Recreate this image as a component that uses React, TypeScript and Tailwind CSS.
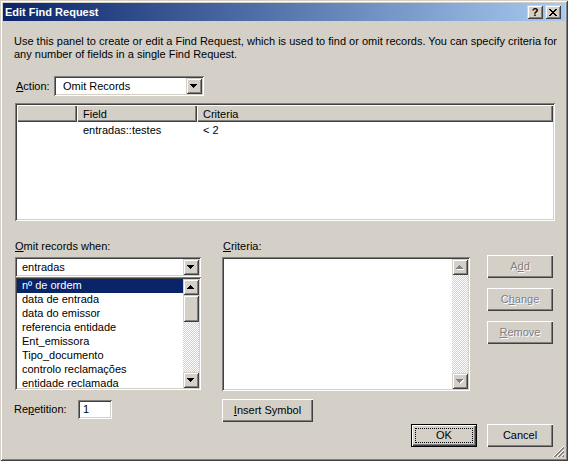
import React from 'react';

const sunken =
    'shadow-[inset_1px_1px_0_#808080,inset_-1px_-1px_0_#ffffff,inset_2px_2px_0_#404040,inset_-2px_-2px_0_#d4d0c8]';
const raised =
    'shadow-[inset_1px_1px_0_#d4d0c8,inset_-1px_-1px_0_#404040,inset_2px_2px_0_#ffffff,inset_-2px_-2px_0_#808080]';
const pushBtn =
    'shadow-[inset_1px_1px_0_#ffffff,inset_-1px_-1px_0_#404040,inset_-2px_-2px_0_#808080]';
const dither =
    'bg-[repeating-conic-gradient(#ffffff_0_25%,#d4d0c8_0_50%)] bg-[length:2px_2px]';

function Arrow({ up = false, disabled = false }: { up?: boolean; disabled?: boolean }) {
    const rows = up ? [3, 2, 1, 0] : [0, 1, 2, 3];
    const shape = (dx: number, fill: string) =>
        rows.map((inset, y) => (
            <rect key={fill + y} x={inset + dx} y={y + dx} width={7 - inset * 2} height={1} fill={fill} />
        ));
    return (
        <svg width="8" height="5" viewBox="0 0 8 5" shapeRendering="crispEdges">
            {disabled ? (
                <>
                    {shape(1, '#ffffff')}
                    {shape(0, '#808080')}
                </>
            ) : (
                shape(0, '#000000')
            )}
        </svg>
    );
}

function ArrowBtn({ up, disabled }: { up?: boolean; disabled?: boolean }) {
    return (
        <div className={`flex h-[16px] w-[16px] shrink-0 items-center justify-center bg-[#d4d0c8] ${raised}`}>
            <Arrow up={up} disabled={disabled} />
        </div>
    );
}

function Combo({ value, width, pad }: { value: string; width: string; pad: string }) {
    return (
        <div className={`flex h-[20px] ${width} items-center bg-white p-[2px] ${sunken}`}>
            <span className={`flex-1 ${pad}`}>{value}</span>
            <ArrowBtn />
        </div>
    );
}

function Button({
    children,
    w,
    disabled = false,
}: {
    children: React.ReactNode;
    w: string;
    disabled?: boolean;
}) {
    return (
        <div
            className={`flex h-[23px] ${w} items-center justify-center bg-[#d4d0c8] ${pushBtn} ${
                disabled ? 'text-[#808080] [text-shadow:1px_1px_0_#ffffff]' : ''
            }`}
        >
            {children}
        </div>
    );
}

const fields = [
    'nº de ordem',
    'data de entrada',
    'data do emissor',
    'referencia entidade',
    'Ent_emissora',
    'Tipo_documento',
    'controlo reclamações',
    'entidade reclamada',
];

export default function App() {
    return (
        <div className="relative flex h-[461px] w-[568px] flex-col bg-[#d4d0c8] p-[3px] font-['Liberation_Sans',Arial,sans-serif] text-[11px] leading-[13px] text-black shadow-[inset_1px_1px_0_#d4d0c8,inset_-1px_-1px_0_#404040,inset_2px_2px_0_#ffffff,inset_-2px_-2px_0_#808080]">
            {/* title bar */}
            <div className="flex h-[18px] items-center bg-[linear-gradient(to_right,#0a246a,#a6caf0)] pl-[2px] pr-[4px]">
                <span className="flex-1 font-bold text-white">Edit Find Request</span>
                <div className={`flex h-[14px] w-[16px] items-center justify-center bg-[#d4d0c8] font-bold ${raised}`}>
                    ?
                </div>
                <div className={`ml-[2px] flex h-[14px] w-[16px] items-center justify-center bg-[#d4d0c8] ${raised}`}>
                    <svg width="8" height="7" viewBox="0 0 8 7" shapeRendering="crispEdges">
                        <path
                            d="M0 0h2v1H0zM6 0h2v1H6zM1 1h2v1H1zM5 1h2v1H5zM2 2h4v1H2zM3 3h2v1H3zM2 4h4v1H2zM1 5h2v1H1zM5 5h2v1H5zM0 6h2v1H0zM6 6h2v1H6z"
                            fill="#000"
                        />
                    </svg>
                </div>
            </div>

            <div className="flex flex-col pl-[11px] pr-[11px]">
                <p className="mt-[14px] whitespace-nowrap">
                    Use this panel to create or edit a Find Request, which is used to find or omit records. You can specify criteria for
                    <br />
                    any number of fields in a single Find Request.
                </p>

                {/* action */}
                <div className="mt-[15px] flex h-[20px] items-center">
                    <span className="w-[40px] pl-[2px]">
                        <u>A</u>ction:
                    </span>
                    <Combo value="Omit Records" width="w-[150px]" pad="pl-[7px]" />
                </div>

                {/* request list */}
                <div className={`ml-[1px] mt-[7px] flex h-[118px] w-[540px] flex-col bg-white p-[2px] ${sunken}`}>
                    <div className="flex h-[17px] shrink-0 bg-[#d4d0c8]">
                        <div className={`w-[60px] ${pushBtn}`} />
                        <div className={`flex w-[120px] items-center pl-[6px] pt-[2px] ${pushBtn}`}>Field</div>
                        <div className={`flex flex-1 items-center pl-[6px] pt-[2px] ${pushBtn}`}>Criteria</div>
                    </div>
                    <div className="mt-[2px] flex">
                        <span className="w-[60px]" />
                        <span className="w-[120px] pl-[6px]">entradas::testes</span>
                        <span className="pl-[6px]">&lt; 2</span>
                    </div>
                </div>

                {/* lower part */}
                <div className="mt-[19px] flex">
                    <div className="ml-[1px] flex w-[186px] flex-col">
                        <span className="h-[17px]">
                            <u>O</u>mit records when:
                        </span>
                        <Combo value="entradas" width="w-[186px]" pad="pl-[5px]" />
                        <div className={`flex h-[113px] bg-white p-[2px] ${sunken}`}>
                            <div className="flex flex-1 flex-col overflow-hidden">
                                {fields.map((f, i) => (
                                    <div
                                        key={f}
                                        className={`h-[14px] shrink-0 whitespace-nowrap pl-[5px] leading-[13px] ${
                                            i === 0 ? 'bg-[#0a246a] text-white' : ''
                                        }`}
                                    >
                                        {f}
                                    </div>
                                ))}
                            </div>
                            <div className="flex w-[16px] flex-col">
                                <ArrowBtn up />
                                <div className={`h-[27px] bg-[#d4d0c8] ${raised}`} />
                                <div className={`flex-1 ${dither}`} />
                                <ArrowBtn />
                            </div>
                        </div>
                        <div className="-ml-[1px] mt-[10px] flex h-[19px] items-center">
                            <span className="w-[64px]">
                                Re<u>p</u>etition:
                            </span>
                            <div className={`flex h-[19px] w-[34px] items-center bg-white p-[2px] pl-[5px] ${sunken}`}>1</div>
                        </div>
                    </div>

                    <div className="ml-[21px] flex w-[248px] flex-col">
                        <span className="h-[17px] pl-[1px]">
                            <u>C</u>riteria:
                        </span>
                        <div className={`flex h-[134px] justify-end bg-white p-[2px] ${sunken}`}>
                            <div className="flex w-[16px] flex-col">
                                <ArrowBtn up disabled />
                                <div className={`flex-1 ${dither}`} />
                                <ArrowBtn disabled />
                            </div>
                        </div>
                        <div className="mt-[8px]">
                            <Button w="w-[91px]">
                                <span>
                                    <u>I</u>nsert Symbol
                                </span>
                            </Button>
                        </div>
                    </div>

                    <div className="ml-[17px] flex w-[66px] flex-col gap-[10px] pt-[15px]">
                        <Button w="w-[66px]" disabled>
                            <span>
                                A<u>d</u>d
                            </span>
                        </Button>
                        <Button w="w-[66px]" disabled>
                            <span>
                                C<u>h</u>ange
                            </span>
                        </Button>
                        <Button w="w-[66px]" disabled>
                            <span>
                                <u>R</u>emove
                            </span>
                        </Button>
                    </div>
                </div>

                {/* ok / cancel */}
                <div className="mt-[2px] flex justify-end gap-[10px] pr-[1px]">
                    <div className="flex h-[23px] w-[66px] bg-[#d4d0c8] p-[4px] shadow-[inset_0_0_0_1px_#000000,inset_2px_2px_0_#ffffff,inset_-2px_-2px_0_#404040,inset_-3px_-3px_0_#808080]">
                        <span className="flex flex-1 items-center justify-center border border-dotted border-black">OK</span>
                    </div>
                    <Button w="w-[66px]">Cancel</Button>
                </div>
            </div>

            {/* size grip */}
            <svg className="absolute bottom-[3px] right-[3px]" width="12" height="12" viewBox="0 0 12 12" shapeRendering="crispEdges">
                <path d="M11 1L1 11M11 5L5 11M11 9L9 11" stroke="#808080" strokeWidth="1" />
                <path d="M11 2L2 11M11 6L6 11M11 10L10 11" stroke="#808080" strokeWidth="1" />
                <path d="M11 0L0 11M11 4L4 11M11 8L8 11" stroke="#ffffff" strokeWidth="1" />
            </svg>
        </div>
    );
}
